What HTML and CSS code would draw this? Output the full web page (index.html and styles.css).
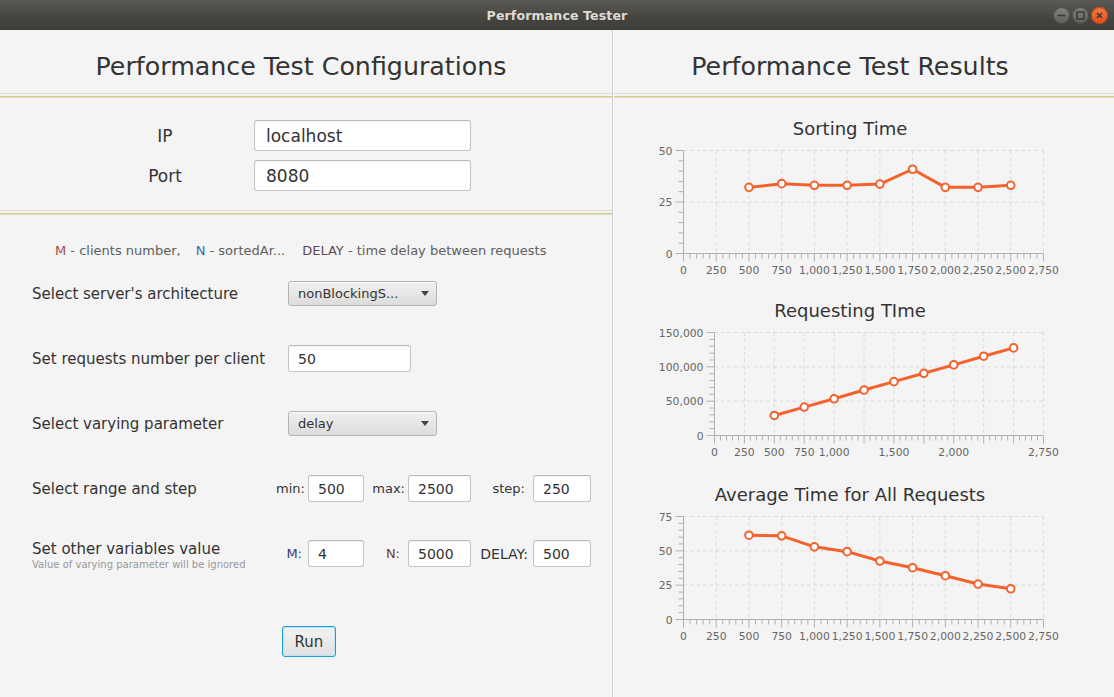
FILE: index.html
```html
<!DOCTYPE html>
<html lang="en">
<head>
<meta charset="utf-8">
<title>Performance Tester</title>
<link rel="stylesheet" href="styles.css">
</head>
<body>
<div class="window">
  <header class="titlebar">
    <span class="wintitle">Performance Tester</span>
    <div class="wbtns">
      <span class="wbtn grey"><svg width="17" height="17" viewBox="0 0 17 17"><line x1="4.5" y1="8.5" x2="12.5" y2="8.5" class="glyph"/></svg></span>
      <span class="wbtn grey"><svg width="17" height="17" viewBox="0 0 17 17"><rect x="5" y="5" width="7" height="7" class="glyph"/></svg></span>
      <span class="wbtn close"><svg width="17" height="17" viewBox="0 0 17 17"><path d="M6 6 L11 11 M11 6 L6 11" class="glyph"/></svg></span>
    </div>
  </header>
  <main class="content">
    <section class="left">
      <div class="head head-left"><h1>Performance Test Configurations</h1></div>
      <div class="sep"></div>
      <div class="conn">
        <span class="clabel">IP</span><div class="field big">localhost</div>
        <span class="clabel">Port</span><div class="field big">8080</div>
      </div>
      <div class="sep"></div>
      <div class="config">
        <p class="legend"><span class="lg"><span class="key-m">M</span> - clients number,</span><span class="lg"><span class="key-n">N</span> - sortedAr...</span><span class="lg"><span class="key-d">DELAY</span> - time delay between requests</span></p>
        <div class="rows">
          <div class="row">
            <span class="rlabel">Select server's architecture</span>
            <div class="combo"><span>nonBlockingS...</span><i class="arrow"></i></div>
          </div>
          <div class="row">
            <span class="rlabel">Set requests number per client</span>
            <div class="field num req">50</div>
          </div>
          <div class="row">
            <span class="rlabel">Select varying parameter</span>
            <div class="combo"><span>delay</span><i class="arrow"></i></div>
          </div>
          <div class="row">
            <span class="rlabel short">Select range and step</span>
            <div class="trio">
              <span class="tlabel">min:</span><div class="field num">500</div>
              <span class="tlabel">max:</span><div class="field num">2500</div>
              <span class="tlabel far">step:</span><div class="field num">250</div>
            </div>
          </div>
          <div class="row">
            <div class="rlabel short stack">
              <span>Set other variables value</span>
              <span class="note">Value of varying parameter will be ignored</span>
            </div>
            <div class="trio">
              <span class="tlabel mid key-m2">M:</span><div class="field num">4</div>
              <span class="tlabel far key-n2">N:</span><div class="field num">5000</div>
              <span class="tlabel wide">DELAY:</span><div class="field num">500</div>
            </div>
          </div>
          <div class="runwrap"><button class="run" type="button">Run</button></div>
        </div>
      </div>
    </section>
    <section class="right">
      <div class="head head-right"><h1>Performance Test Results</h1></div>
      <div class="sep"></div>
      <div class="charts">
        <div class="chart">
          <div class="ctitle">Sorting Time</div>
          <svg id="chart-sort" class="plot" width="500" height="146"></svg>
        </div>
        <div class="chart">
          <div class="ctitle">Requesting TIme</div>
          <svg id="chart-req" class="plot" width="500" height="146"></svg>
        </div>
        <div class="chart chart-last">
          <div class="ctitle">Average Time for All Requests</div>
          <svg id="chart-avg" class="plot" width="500" height="146"></svg>
        </div>
      </div>
    </section>
  </main>
</div>
<script src="script.js"></script>
</body>
</html>
```

FILE: styles.css
```css
* { box-sizing: border-box; margin: 0; padding: 0; }
html, body { width: 1114px; height: 697px; overflow: hidden; }
body {
  font-family: "DejaVu Sans", "Liberation Sans", sans-serif;
  color: #333;
  background: #f4f4f4;
}

/* title bar */
.titlebar {
  height: 30px;
  display: grid;
  grid-template-columns: 1fr auto 1fr;
  align-items: center;
  background: linear-gradient(#5b5954, #45443f 60%, #3f3e3a);
  color: #dfdbd2;
}
.wintitle { grid-column: 2; font-weight: bold; font-size: 12.6px; letter-spacing: 0.1px; }
.wbtns { grid-column: 3; justify-self: end; display: flex; gap: 2px; padding-right: 6px; }
.wbtn { width: 17px; height: 17px; border-radius: 50%; display: block; }
.wbtn svg { display: block; }
.wbtn.grey { background: linear-gradient(#85837e, #615f5a); box-shadow: inset 0 0 0 1px #4a4944; }
.wbtn.close { background: linear-gradient(#f57a45, #e0501c); box-shadow: inset 0 0 0 1px #b8461c; }
.glyph { fill: none; stroke: #3a3935; stroke-width: 1.5; }

/* layout */
.content { display: flex; height: 667px; }
.left { width: 613px; border-right: 1px solid #cfcfcf; }
.right { flex: 1; border-left: 1px solid #fcfcfc; }

.head { height: 63px; padding-top: 9px; display: flex; align-items: center; justify-content: center; }
.head h1 { font-size: 25.3px; font-weight: normal; color: #333; }
.head-left { padding-right: 10px; }
.head-right { padding-right: 28px; }

.sep {
  height: 5px;
  background: linear-gradient(#dddcc8 0 1px, transparent 1px 3px, #cfcb8e 3px 4px, #e3e1c0 4px 5px);
}

/* connection block */
.conn {
  height: 112px;
  padding: 22px 0 0 120px;
  display: grid;
  grid-template-columns: 90px 217px;
  grid-auto-rows: 31px;
  column-gap: 44px;
  row-gap: 9px;
}
.clabel { font-size: 17px; text-align: center; align-self: center; }

.field {
  background: #fff;
  border: 1px solid #c4c4c4;
  border-top-color: #b9b9b9;
  border-radius: 3px;
  box-shadow: inset 0 1px 1px rgba(0, 0, 0, 0.05);
  display: flex;
  align-items: center;
  color: #333;
}
.field.big { font-size: 17px; padding-left: 11px; height: 31px; }
.field.num { font-size: 14px; padding-left: 9px; height: 27px; }
.field.req { width: 123px; }

/* config block */
.config { padding-top: 28px; }
.legend { font-size: 13px; line-height: 16px; color: #5e5e5e; padding-left: 55px; margin-bottom: 21px; white-space: nowrap; }
.lg { margin-right: 15px; }
.lg:nth-child(2) { margin-right: 17px; }
.key-m { color: #a04c58; }
.key-n { color: #3f66aa; }
.key-d { color: #5d4a55; }

.rows { display: flex; flex-direction: column; gap: 38px; }
.row { display: flex; align-items: center; height: 27px; padding-left: 32px; }
.rlabel { width: 256px; font-size: 15px; flex: none; }
.rlabel.short { width: 238px; }
.stack { display: flex; flex-direction: column; padding-top: 4px; }
.stack .note { font-size: 10px; color: #999; margin-top: 1px; line-height: 12px; }

.combo {
  width: 149px;
  height: 25px;
  border: 1px solid #b3b3b3;
  border-radius: 3px;
  background: linear-gradient(#f0f0f0, #dcdcdc);
  box-shadow: inset 0 1px 0 rgba(255, 255, 255, 0.7);
  display: flex;
  align-items: center;
  padding-left: 9px;
  font-size: 13px;
  color: #333;
}
.arrow {
  margin-left: auto;
  margin-right: 7px;
  width: 0; height: 0;
  border-left: 4.5px solid transparent;
  border-right: 4.5px solid transparent;
  border-top: 5px solid #444;
}

.trio {
  display: grid;
  grid-template-columns: 38px 56px 44px 63px 62px 58px;
  align-items: center;
}
.tlabel { font-size: 13px; text-align: right; padding-right: 3px; }
.tlabel.mid { padding-right: 6px; }
.tlabel.far { padding-right: 8px; }
.tlabel.wide { font-size: 14px; padding-right: 5px; }
.key-m2 { color: #3a3d78; }
.key-n2 { color: #7e3636; }

.runwrap { margin-top: 21px; padding-left: 282px; }
.run {
  width: 54px;
  height: 31px;
  font-family: "DejaVu Sans", sans-serif;
  font-size: 15px;
  color: #333;
  border: 1px solid #169fd6;
  border-radius: 3px;
  background: linear-gradient(#f3f3f3, #e0e0e0);
  box-shadow: inset 0 0 0 1px #bfe3f3;
}

/* charts */
.charts { padding-top: 19px; display: flex; flex-direction: column; gap: 12px; }
.chart-last { margin-top: 2px; }
.ctitle { font-size: 18px; line-height: 24px; height: 24px; text-align: center; padding-right: 28px; color: #333; }
.plot { display: block; }
.grid { stroke: #dadada; stroke-width: 1; stroke-dasharray: 3.5 3; }
.axis, .tk { stroke: #b0b0b0; stroke-width: 1; }
.tick { font-family: "DejaVu Sans", sans-serif; font-size: 10.8px; fill: #666; }
.series { fill: none; stroke: #f3622d; stroke-width: 3; stroke-linejoin: round; }
.dot { fill: #fff; stroke: #f3622d; stroke-width: 2; }
```

FILE: script.js
```js
(function () {
  var NS = 'http://www.w3.org/2000/svg';
  var XS = [500, 750, 1000, 1250, 1500, 1750, 2000, 2250, 2500];
  var CHARTS = [
    { id: 'chart-sort', left: 69.5, ymax: 50, ystep: 25,
      data: [32.1, 33.9, 33.1, 33.1, 33.7, 40.9, 32.1, 32.1, 33.1], hide: [] },
    { id: 'chart-req', left: 100.5, ymax: 150000, ystep: 50000,
      data: [29200, 41400, 53500, 66200, 78400, 90600, 102800, 115500, 127600], hide: [1250, 1750, 2250, 2500] },
    { id: 'chart-avg', left: 69.5, ymax: 75, ystep: 25,
      data: [61.4, 60.9, 52.9, 49.4, 42.6, 37.7, 31.9, 25.8, 22.4], hide: [] }
  ];
  var RIGHT = 429.5, TOP = 9.5, BOTTOM = 112.5, XMAX = 2750, XSTEP = 250;

  function add(parent, tag, attrs, text) {
    var e = document.createElementNS(NS, tag);
    Object.keys(attrs).forEach(function (k) { e.setAttribute(k, attrs[k]); });
    if (text !== undefined) e.textContent = text;
    parent.appendChild(e);
    return e;
  }
  function fmt(n) { return String(n).replace(/\B(?=(\d{3})+(?!\d))/g, ','); }

  CHARTS.forEach(function (c) {
    var svg = document.getElementById(c.id);
    if (!svg) return;
    var W = RIGHT - c.left, H = BOTTOM - TOP;
    function X(v) { return c.left + v / XMAX * W; }
    function Y(v) { return BOTTOM - v / c.ymax * H; }
    var v;
    for (v = XSTEP; v <= XMAX; v += XSTEP) {
      add(svg, 'line', { x1: X(v), x2: X(v), y1: TOP, y2: BOTTOM, 'class': 'grid' });
    }
    for (v = c.ystep; v <= c.ymax; v += c.ystep) {
      add(svg, 'line', { x1: c.left, x2: RIGHT, y1: Y(v), y2: Y(v), 'class': 'grid' });
    }
    var xm = XSTEP / 5;
    for (v = 0; v <= XMAX; v += xm) {
      var len = (v % XSTEP === 0) ? 8 : 5;
      add(svg, 'line', { x1: X(v), x2: X(v), y1: BOTTOM, y2: BOTTOM + len, 'class': 'tk' });
    }
    var ym = c.ystep / 5;
    for (v = 0; v <= c.ymax; v += ym) {
      var l2 = (v % c.ystep === 0) ? 8 : 5;
      add(svg, 'line', { x1: c.left - l2, x2: c.left, y1: Y(v), y2: Y(v), 'class': 'tk' });
    }
    add(svg, 'line', { x1: c.left, x2: c.left, y1: TOP, y2: BOTTOM, 'class': 'axis' });
    add(svg, 'line', { x1: c.left, x2: RIGHT, y1: BOTTOM, y2: BOTTOM, 'class': 'axis' });

    for (v = 0; v <= XMAX; v += XSTEP) {
      if (c.hide.indexOf(v) !== -1) continue;
      add(svg, 'text', { x: X(v), y: BOTTOM + 20, 'text-anchor': 'middle', 'class': 'tick' }, fmt(v));
    }
    for (v = 0; v <= c.ymax; v += c.ystep) {
      add(svg, 'text', { x: c.left - 11, y: Y(v) + 4, 'text-anchor': 'end', 'class': 'tick' }, fmt(v));
    }

    var pts = XS.map(function (x, i) { return X(x).toFixed(2) + ',' + Y(c.data[i]).toFixed(2); }).join(' ');
    add(svg, 'polyline', { points: pts, 'class': 'series' });
    XS.forEach(function (x, i) {
      add(svg, 'circle', { cx: X(x), cy: Y(c.data[i]), r: 3.8, 'class': 'dot' });
    });
  });
})();
```
